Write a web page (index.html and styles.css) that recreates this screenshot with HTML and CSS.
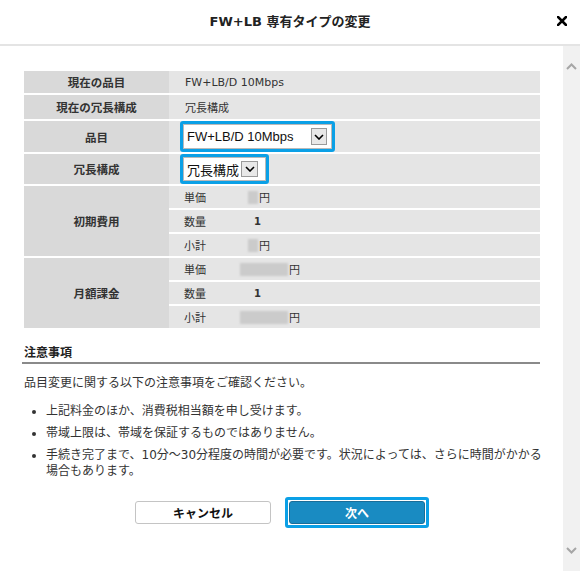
FILE: index.html
```html
<!DOCTYPE html>
<html lang="ja">
<head>
<meta charset="utf-8">
<title>FW+LB 専有タイプの変更</title>
<link rel="stylesheet" href="styles.css">
</head>
<body>
<div class="dialog">
  <header class="header">
    <h1 class="title">FW+LB 専有タイプの変更</h1>
    <span class="close" aria-label="閉じる">
      <svg width="10" height="10" viewBox="0 0 10 10"><path d="M1 1L9 9M9 1L1 9" stroke="#000" stroke-width="2.6" stroke-linecap="square"/></svg>
    </span>
  </header>
  <div class="main">
    <div class="content">
      <div class="info">
        <div class="lbl">現在の品目</div>
        <div class="val span2">FW+LB/D 10Mbps</div>

        <div class="lbl">現在の冗長構成</div>
        <div class="val span2">冗長構成</div>

        <div class="lbl">品目</div>
        <div class="val span2 selcell">
          <div class="focus">
            <div class="select sel-wide">
              <span class="sel-text">FW+LB/D 10Mbps</span>
              <span class="sel-arrow"><svg width="10" height="6" viewBox="0 0 10 6"><path d="M1 1L5 5L9 1" fill="none" stroke="#000" stroke-width="1.6"/></svg></span>
            </div>
          </div>
        </div>

        <div class="lbl">冗長構成</div>
        <div class="val span2 selcell">
          <div class="focus">
            <div class="select sel-small">
              <span class="sel-text">冗長構成</span>
              <span class="sel-arrow"><svg width="10" height="6" viewBox="0 0 10 6"><path d="M1 1L5 5L9 1" fill="none" stroke="#000" stroke-width="1.6"/></svg></span>
            </div>
          </div>
        </div>

        <div class="lbl span3">初期費用</div>
        <div class="sub">単価</div>
        <div class="amt"><span class="redact short"></span>円</div>
        <div class="sub">数量</div>
        <div class="amt"><span class="qty">1</span></div>
        <div class="sub">小計</div>
        <div class="amt"><span class="redact short"></span>円</div>

        <div class="lbl span3">月額課金</div>
        <div class="sub">単価</div>
        <div class="amt"><span class="redact long"></span>円</div>
        <div class="sub">数量</div>
        <div class="amt"><span class="qty">1</span></div>
        <div class="sub">小計</div>
        <div class="amt"><span class="redact long"></span>円</div>
      </div>

      <h2 class="notes-title">注意事項</h2>
      <p class="notes-lead">品目変更に関する以下の注意事項をご確認ください。</p>
      <ul class="notes">
        <li>上記料金のほか、消費税相当額を申し受けます。</li>
        <li>帯域上限は、帯域を保証するものではありません。</li>
        <li>手続き完了まで、10分〜30分程度の時間が必要です。状況によっては、さらに時間がかかる場合もあります。</li>
      </ul>

      <div class="actions">
        <span class="btn btn-cancel">キャンセル</span>
        <span class="btn-focus"><span class="btn btn-next">次へ</span></span>
      </div>
    </div>
    <div class="scrollbar">
      <svg class="sb-up" width="11" height="7" viewBox="0 0 11 7"><path d="M1 6L5.5 1.5L10 6" fill="none" stroke="#a6a6a6" stroke-width="2"/></svg>
      <svg class="sb-down" width="11" height="7" viewBox="0 0 11 7"><path d="M1 1L5.5 5.5L10 1" fill="none" stroke="#a6a6a6" stroke-width="2"/></svg>
    </div>
  </div>
</div>
</body>
</html>
```

FILE: styles.css
```css
* { box-sizing: border-box; }

html, body {
  margin: 0;
  padding: 0;
  background: #fff;
}

body {
  font-family: "DejaVu Sans", "Noto Sans CJK JP", sans-serif;
  color: #333;
  width: 580px;
  height: 571px;
  overflow: hidden;
}

.dialog {
  width: 580px;
  height: 571px;
  display: flex;
  flex-direction: column;
}

.header {
  height: 46px;
  flex: none;
  border-bottom: 2px solid #e4e4e4;
  display: flex;
  align-items: center;
  justify-content: center;
  position: relative;
}

.title {
  margin: 0;
  font-size: 13px;
  font-weight: bold;
  color: #222;
  line-height: 16px;
}

.close {
  position: absolute;
  right: 13px;
  top: 16px;
  width: 10px;
  height: 10px;
  display: flex;
}

.main {
  flex: 1;
  display: flex;
  min-height: 0;
}

.content {
  flex: 1;
  padding: 25px 23px 0 24px;
}

.scrollbar {
  width: 17px;
  flex: none;
  background: #f1f1f1;
  display: flex;
  flex-direction: column;
  align-items: center;
  justify-content: space-between;
  padding: 17px 0 17px;
}

/* info table */
.info {
  display: grid;
  grid-template-columns: 145px 71px 1fr;
  grid-template-rows: 22px 24px 31px 30px repeat(6, 22px);
  row-gap: 2px;
}

.lbl {
  background: #d9d9d9;
  display: flex;
  align-items: center;
  justify-content: center;
  font-size: 11.5px;
  font-weight: bold;
  color: #333;
}

.span2 { grid-column: span 2; }
.span3 { grid-row: span 3; }

.val {
  background: #e5e5e5;
  display: flex;
  align-items: center;
  padding-left: 16px;
  font-size: 11px;
  color: #333;
}

.selcell { padding-left: 11px; }

.sub {
  background: #e5e5e5;
  display: flex;
  align-items: center;
  padding-left: 15px;
  font-size: 11px;
  color: #333;
}

.amt {
  background: #e5e5e5;
  display: flex;
  align-items: center;
  font-size: 11px;
  color: #333;
}

.qty {
  margin-left: 14px;
  font-weight: bold;
  font-size: 10px;
}

.redact {
  display: inline-block;
  height: 13px;
  background: #cbcbcb;
  filter: blur(1.2px);
  margin-right: 1px;
}
.redact.short { width: 10px; margin-left: 8px; }
.redact.long { width: 48px; }

/* selects */
.focus {
  height: 100%;
  border: 3px solid #0ba0e6;
  border-radius: 3px;
  display: flex;
}

.select {
  background: #fff;
  border: 1px solid #b9b9b9;
  display: flex;
  align-items: center;
  font-family: "Liberation Sans", "Noto Sans CJK JP", sans-serif;
  font-size: 13px;
  color: #111;
}

.sel-wide {
  width: 149px;
  padding: 0 4px 0 3px;
}

.sel-small {
  width: 83px;
  padding: 0 2px 0 3px;
}

.sel-text { white-space: nowrap; }

.sel-arrow {
  margin-left: auto;
  width: 16px;
  height: 17px;
  background: #e8e8e8;
  border: 1px solid #9a9a9a;
  display: flex;
  align-items: center;
  justify-content: center;
}

.sel-small .sel-arrow {
  width: 17px;
  height: 16px;
  margin-left: 2px;
}

/* notes */
.notes-title {
  margin: 16px 0 0 -2px;
  padding: 0 0 0 2px;
  font-size: 12px;
  font-weight: bold;
  line-height: 18px;
  color: #222;
  border-bottom: 2px solid #8a8a8a;
}

.notes-lead {
  margin: 10px 0 0;
  font-size: 12px;
  line-height: 18px;
  color: #333;
}

.notes {
  margin: 11px -4px 0 0;
  padding: 0 0 0 22px;
  font-size: 12px;
  line-height: 16px;
  color: #333;
}

.notes li { margin-bottom: 6px; }
.notes li:last-child { margin-bottom: 0; }

/* buttons */
.actions {
  display: flex;
  justify-content: center;
  align-items: center;
  gap: 14px;
  margin-top: 18px;
}

.btn {
  display: flex;
  align-items: center;
  justify-content: center;
  width: 136px;
  height: 23px;
  border-radius: 3px;
  font-size: 12px;
  font-weight: bold;
}

.btn-cancel {
  background: #fff;
  border: 1px solid #c4c4c4;
  color: #111;
}

.btn-focus {
  display: flex;
  border: 3px solid #0ba0e6;
  border-radius: 3px;
  padding: 1px;
  background: #fff;
}

.btn-next {
  background: #198bc2;
  border: 1px solid #1a6d98;
  color: #fff;
}
```
